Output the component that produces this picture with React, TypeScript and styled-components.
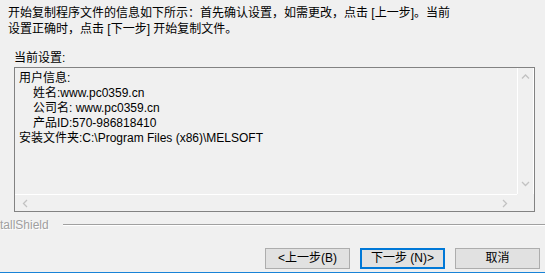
import React from 'react';
import styled, { createGlobalStyle } from 'styled-components';

const GlobalStyle = createGlobalStyle`
  html, body {
    margin: 0;
    padding: 0;
    background: #f0f0f0;
  }
  body {
    font-family: "Liberation Sans", "Noto Sans CJK SC", sans-serif;
    font-size: 12px;
    color: #000;
  }
`;

const Page = styled.div`
  width: 545px;
  height: 273px;
  background: #f0f0f0;
  display: flex;
  flex-direction: column;
  overflow: hidden;
  position: relative;
`;

const Intro = styled.div`
  padding: 5px 0 0 8px;
  line-height: 16px;
  white-space: pre;
`;

const Label = styled.div`
  margin: 14px 0 0 14px;
  line-height: 14px;
`;

const InfoBox = styled.div`
  margin: 2px 10px 0 14px;
  height: 143px;
  border: 1px solid #828282;
  display: grid;
  grid-template-columns: 1fr 17px;
  grid-template-rows: 1fr 17px;
`;

const InfoText = styled.div`
  padding: 3px 0 0 4px;
  line-height: 15px;
  white-space: pre;
  overflow: hidden;
`;

const Indent = styled.div`
  padding-left: 14px;
`;

const ScrollV = styled.div`
  border-left: 1px solid #fff;
  border-right: 1px solid #fff;
  display: flex;
  flex-direction: column;
  justify-content: space-between;
  align-items: center;
  padding: 4px 0 6px;
`;

const ScrollH = styled.div`
  border-top: 1px solid #fff;
  display: flex;
  justify-content: space-between;
  align-items: center;
  padding: 0 8px 0 6px;
`;

const Corner = styled.div``;

const Arrow = styled.svg`
  width: 9px;
  height: 9px;
  fill: none;
  stroke: #c2c2c2;
  stroke-width: 1.3;
`;

const Divider = styled.div`
  margin-top: 5px;
  display: flex;
  align-items: center;
  height: 16px;
`;

const Brand = styled.span`
  margin-left: 0;
  color: #a0a0a0;
  text-shadow: 1px 1px 0 #fff;
`;

const Rule = styled.div`
  flex: 1;
  margin-left: 14px;
  border-top: 1px solid #a0a0a0;
  border-bottom: 1px solid #fff;
`;

const Buttons = styled.div`
  margin-top: 15px;
  display: flex;
  justify-content: flex-end;
  gap: 10px;
  padding-right: 5px;
`;

const Button = styled.button<{ $primary?: boolean }>`
  width: 85px;
  height: 21px;
  box-sizing: border-box;
  margin: 0;
  padding: 0;
  font: inherit;
  line-height: 17px;
  color: #000;
  background: #e1e1e1;
  border: ${(p) => (p.$primary ? '2px solid #0078d7' : '1px solid #adadad')};
`;

const WindowEdge = styled.div`
  position: absolute;
  left: 0;
  right: 0;
  bottom: 0;
  height: 1px;
  background: #1883d7;
`;

const Chevron = ({ dir }: { dir: 'up' | 'down' | 'left' | 'right' }) => {
  const d = {
    up: 'M1 6.5 L4.5 3 L8 6.5',
    down: 'M1 3 L4.5 6.5 L8 3',
    left: 'M6 1 L2.5 4.5 L6 8',
    right: 'M3 1 L6.5 4.5 L3 8',
  }[dir];
  return (
    <Arrow viewBox="0 0 9 9">
      <path d={d} />
    </Arrow>
  );
};

export default function App() {
  return (
    <Page>
      <GlobalStyle />
      <Intro>
        {'开始复制程序文件的信息如下所示：首先确认设置，如需更改，点击 [上一步]。当前\n设置正确时，点击 [下一步] 开始复制文件。'}
      </Intro>
      <Label>当前设置:</Label>
      <InfoBox>
        <InfoText>
          <div>用户信息:</div>
          <Indent>姓名:www.pc0359.cn</Indent>
          <Indent>公司名: www.pc0359.cn</Indent>
          <Indent>产品ID:570-986818410</Indent>
          <div>安装文件夹:C:\Program Files (x86)\MELSOFT</div>
        </InfoText>
        <ScrollV>
          <Chevron dir="up" />
          <Chevron dir="down" />
        </ScrollV>
        <ScrollH>
          <Chevron dir="left" />
          <Chevron dir="right" />
        </ScrollH>
        <Corner />
      </InfoBox>
      <Divider>
        <Brand>tallShield</Brand>
        <Rule />
      </Divider>
      <Buttons>
        <Button>&lt;上一步(B)</Button>
        <Button $primary>下一步 (N)&gt;</Button>
        <Button>取消</Button>
      </Buttons>
      <WindowEdge />
    </Page>
  );
}
